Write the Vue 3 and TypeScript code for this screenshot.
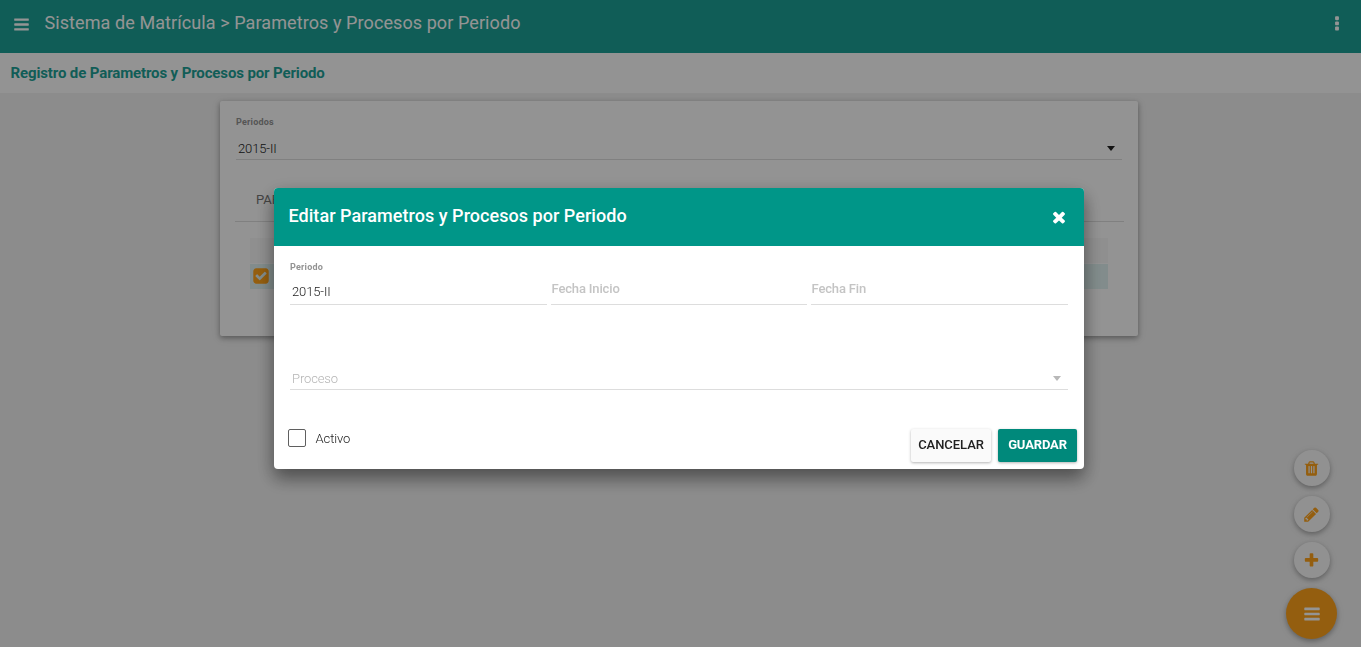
<script setup lang="ts">
import { ref } from 'vue'

type IconName = 'bars' | 'more' | 'close' | 'plus' | 'pencil' | 'trash' | 'checked'

const icons: Record<IconName, string> = {
  bars: 'M1664 1344v128q0 26-19 45t-45 19h-1408q-26 0-45-19t-19-45v-128q0-26 19-45t45-19h1408q26 0 45 19t19 45zm0-512v128q0 26-19 45t-45 19h-1408q-26 0-45-19t-19-45v-128q0-26 19-45t45-19h1408q26 0 45 19t19 45zm0-512v128q0 26-19 45t-45 19h-1408q-26 0-45-19t-19-45v-128q0-26 19-45t45-19h1408q26 0 45 19t19 45z',
  more: 'M1088 1248v192q0 40-28 68t-68 28h-192q-40 0-68-28t-28-68v-192q0-40 28-68t68-28h192q40 0 68 28t28 68zm0-512v192q0 40-28 68t-68 28h-192q-40 0-68-28t-28-68v-192q0-40 28-68t68-28h192q40 0 68 28t28 68zm0-512v192q0 40-28 68t-68 28h-192q-40 0-68-28t-28-68v-192q0-40 28-68t68-28h192q40 0 68 28t28 68z',
  close: 'M1490 1322q0 40-28 68l-136 136q-28 28-68 28t-68-28l-294-294-294 294q-28 28-68 28t-68-28l-136-136q-28-28-28-68t28-68l294-294-294-294q-28-28-28-68t28-68l136-136q28-28 68-28t68 28l294 294 294-294q28-28 68-28t68 28l136 136q28 28 28 68t-28 68l-294 294 294 294q28 28 28 68z',
  plus: 'M1600 736v192q0 40-28 68t-68 28h-416v416q0 40-28 68t-68 28h-192q-40 0-68-28t-28-68v-416h-416q-40 0-68-28t-28-68v-192q0-40 28-68t68-28h416v-416q0-40 28-68t68-28h192q40 0 68 28t28 68v416h416q40 0 68 28t28 68z',
  pencil: 'M491 1536l91-91-235-235-91 91v107h128v128h107zm523-928q0-22-22-22-10 0-17 7l-542 542q-7 7-7 17 0 22 22 22 10 0 17-7l542-542q7-7 7-17zm-54-192l416 416-832 832h-416v-416zm683 96q0 53-37 90l-166 166-416-416 166-165q36-38 90-38 53 0 91 38l235 234q37 39 37 91z',
  trash: 'M704 1376v-704q0-14-9-23t-23-9h-64q-14 0-23 9t-9 23v704q0 14 9 23t23 9h64q14 0 23-9t9-23zm256 0v-704q0-14-9-23t-23-9h-64q-14 0-23 9t-9 23v704q0 14 9 23t23 9h64q14 0 23-9t9-23zm256 0v-704q0-14-9-23t-23-9h-64q-14 0-23 9t-9 23v704q0 14 9 23t23 9h64q14 0 23-9t9-23zm-544-992h448l-48-117q-7-9-17-11h-317q-10 2-17 11zm928 32v64q0 14-9 23t-23 9h-96v948q0 83-47 143.500t-113 60.500h-832q-66 0-113-58.500t-47-141.500v-952h-96q-14 0-23-9t-9-23v-64q0-14 9-23t23-9h309l70-167q15-37 54-63t79-26h320q40 0 79 26t54 63l70 167h309q14 0 23 9t9 23z',
  checked: 'M813 1299l614-614q19-19 19-45t-19-45l-102-102q-19-19-45-19t-45 19l-467 467-211-211q-19-19-45-19t-45 19l-102 102q-19 19-19 45t19 45l358 358q19 19 45 19t45-19zm851-883v960q0 119-84.500 203.500t-203.500 84.500h-960q-119 0-203.500-84.500t-84.500-203.500v-960q0-119 84.500-203.500t203.500-84.500h960q119 0 203.500 84.500t84.500 203.500z',
}

const actions: IconName[] = ['trash', 'pencil', 'plus']
const periodo = ref('2015-II')
const activo = ref(false)
</script>

<template>
  <div class="page">
    <header class="topbar">
      <svg class="icon menu" viewBox="0 0 1792 1792"><path :d="icons.bars" /></svg>
      <h1>Sistema de Matrícula &gt; Parametros y Procesos por Periodo</h1>
      <svg class="icon more" viewBox="0 0 1792 1792"><path :d="icons.more" /></svg>
    </header>
    <div class="subbar">Registro de Parametros y Procesos por Periodo</div>

    <main class="card">
      <div class="mini-label">Periodos</div>
      <div class="select">
        <span>{{ periodo }}</span>
        <i class="caret"></i>
      </div>
      <div class="tabs">PARAMETROS</div>
      <div class="table">
        <div class="thead"></div>
        <div class="row">
          <svg class="icon check" viewBox="0 0 1792 1792"><path :d="icons.checked" /></svg>
        </div>
      </div>
    </main>

    <nav class="fabs">
      <button v-for="name in actions" :key="name" class="fab small">
        <svg class="icon" viewBox="0 0 1792 1792"><path :d="icons[name]" /></svg>
      </button>
      <button class="fab main">
        <svg class="icon" viewBox="0 0 1792 1792"><path :d="icons.bars" /></svg>
      </button>
    </nav>

    <div class="overlay">
      <section class="dialog">
        <header class="dialog-head">
          <h2>Editar Parametros y Procesos por Periodo</h2>
          <svg class="icon close" viewBox="0 0 1792 1792"><path :d="icons.close" /></svg>
        </header>
        <div class="fields">
          <div class="field">
            <div class="mini-label">Periodo</div>
            <div class="value">{{ periodo }}</div>
          </div>
          <div class="field"><div class="placeholder">Fecha Inicio</div></div>
          <div class="field"><div class="placeholder">Fecha Fin</div></div>
        </div>
        <div class="select process">
          <span>Proceso</span>
          <i class="caret"></i>
        </div>
        <footer class="dialog-foot">
          <label class="active"><input v-model="activo" type="checkbox" /><span>Activo</span></label>
          <button class="btn cancel">CANCELAR</button>
          <button class="btn save">GUARDAR</button>
        </footer>
      </section>
    </div>
  </div>
</template>

<style>
body { overflow: hidden; }
</style>

<style scoped>
* { box-sizing: border-box; }
.page {
  height: 647px;
  background: #f1f1f1;
  font-family: Roboto, "Liberation Sans", sans-serif;
  font-size: 13px;
  color: #212121;
}
.icon { display: block; flex: none; fill: currentColor; }
h1, h2 { margin: 0; white-space: nowrap; }
.topbar {
  display: flex;
  height: 53px;
  padding: 0 15px 7px 13px;
  align-items: center;
  background: #1da196;
  color: #fff;
}
.menu { width: 17px; height: 17px; margin-top: 2px; }
.more { width: 18px; height: 18px; margin: 2px 0 0 auto; }
.topbar h1 { margin-left: 14.5px; font-size: 18px; font-weight: 400; line-height: 24px; letter-spacing: 0.085px; }
.subbar {
  height: 40px;
  padding-left: 10.5px;
  background: #fdfdfd;
  color: #1da196;
  font-size: 15px;
  font-weight: 700;
  line-height: 40px;
  letter-spacing: -0.125px;
}
.card {
  width: 918px;
  height: 235px;
  margin: 8px 0 0 220px;
  padding: 15px 14px 0 15px;
  border-radius: 2px;
  background: #fdfdfd;
  box-shadow: 0 2px 5px rgba(0, 0, 0, 0.28), 0 2px 10px rgba(0, 0, 0, 0.14);
}
.mini-label { font-size: 9px; font-weight: 700; line-height: 13px; letter-spacing: 0.22px; color: #939393; }
.card .mini-label { height: 12px; margin-left: 1px; }
.select {
  display: flex;
  align-items: center;
  justify-content: space-between;
  font-weight: 300;
  border-bottom: 1px solid #ddd;
  letter-spacing: -0.12px;
}
.card .select { height: 25px; margin: 7px 2px 0 1px; padding: 2px 7px 0 2px; }
.caret {
  width: 0;
  height: 0;
  border: 4.5px solid transparent;
  border-top: 5.5px solid currentColor;
  border-bottom: 0;
}
.tabs {
  height: 62px;
  padding: 29px 0 0 21px;
  border-bottom: 1px solid #ddd;
  line-height: 22px;
  color: #757575;
}
.table { margin: 16px 16px 0 15px; }
.thead { height: 25px; margin-bottom: 1px; background: #f7f7f7; }
.row { display: flex; height: 25px; padding: 3px 0 0 2px; background: #e0f2f1; }
.check { width: 18px; height: 18px; color: #ffa31a; }
.fabs {
  position: fixed;
  right: 24px;
  bottom: 8px;
  display: flex;
  flex-direction: column;
  align-items: center;
  gap: 10px;
}
.fab {
  display: flex;
  align-items: center;
  justify-content: center;
  padding: 0;
  border: 0;
  border-radius: 50%;
  box-shadow: 0 2px 5px rgba(0, 0, 0, 0.26), 0 2px 8px rgba(0, 0, 0, 0.1);
}
.small { width: 36px; height: 36px; background: #fafafa; color: #ffa31a; }
.small .icon { width: 17px; height: 17px; }
.main { width: 51px; height: 51px; background: #ffa31a; color: #fff; }
.main .icon { width: 18px; height: 18px; }
.overlay { position: fixed; inset: 0; padding: 188px 0 0 274px; background: rgba(0, 0, 0, 0.42); }
.dialog {
  width: 810px;
  height: 281px;
  border-radius: 4px;
  background: #fff;
  box-shadow: 0 10px 17px rgba(0, 0, 0, 0.32), 0 6px 20px rgba(0, 0, 0, 0.2);
}
.dialog-head {
  display: flex;
  height: 58px;
  padding: 0 16px 3px 14.5px;
  align-items: center;
  justify-content: space-between;
  border-radius: 4px 4px 0 0;
  background: #009688;
  color: #fff;
}
.dialog-head h2 { font-size: 18px; font-weight: 500; line-height: 24px; letter-spacing: 0.04px; }
.close { width: 18px; height: 18px; margin-top: 2px; }
.fields { display: grid; grid-template-columns: 257px 256px 257px; gap: 4px; padding: 0 16px; }
.field { height: 59px; padding-top: 15px; border-bottom: 1px solid #ddd; }
.value { margin: 8px 0 0 2px; font-weight: 300; line-height: 20px; letter-spacing: -0.12px; }
.placeholder { margin: 18px 0 0 0.5px; font-weight: 500; line-height: 20px; letter-spacing: -0.15px; color: #c4c4c4; }
.process { height: 24px; margin: 61px 16px 0; padding: 2px 7px 0 2px; }
.process span { color: #b5b5b5; }
.process .caret { color: #b8b8b8; }
.dialog-foot { display: flex; height: 79px; padding: 39px 7px 0 14px; align-items: flex-start; }
.active { display: flex; margin-right: auto; font-weight: 300; line-height: 20px; letter-spacing: -0.1px; }
.active input {
  appearance: none;
  width: 18px;
  height: 18px;
  margin: 0 9.5px 0 0;
  border: 1px solid #5f5f5f;
  border-radius: 2px;
}
.btn {
  height: 33px;
  padding: 0 0 2px;
  border: 0;
  border-radius: 2px;
  font: 500 13px/31px Roboto, "Liberation Sans", sans-serif;
  letter-spacing: -0.05px;
  box-shadow: 0 1px 3px rgba(0, 0, 0, 0.3);
}
.cancel { width: 80px; margin-right: 7px; background: #fafafa; color: #212121; }
.save { width: 79px; background: #00897b; color: #fff; font-weight: 700; letter-spacing: -0.15px; }
</style>
